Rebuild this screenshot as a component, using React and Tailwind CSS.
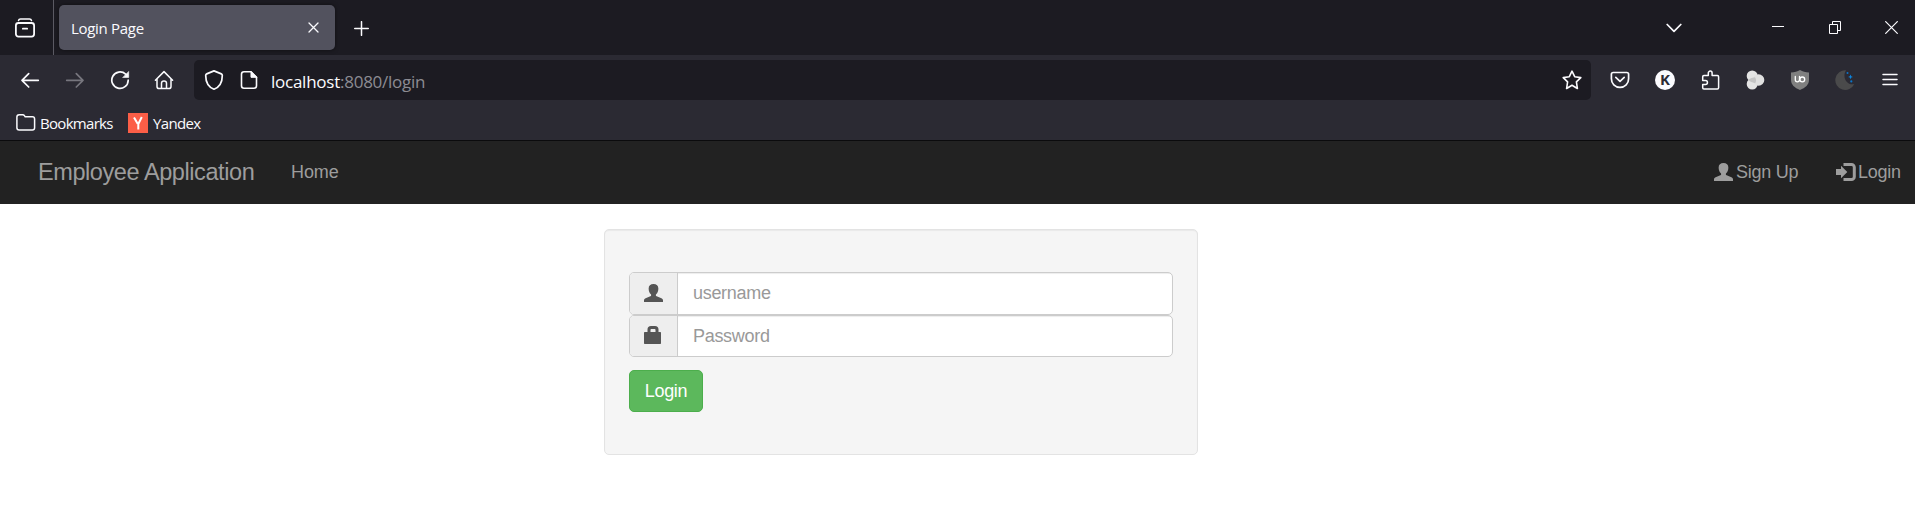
import React from "react";

function Icon({ className = "", size = 20, box = "0 0 20 20", children }) {
  return (
    <svg
      width={size}
      height={size}
      viewBox={box}
      fill="none"
      stroke="currentColor"
      strokeWidth="1.5"
      strokeLinecap="round"
      strokeLinejoin="round"
      className={"block shrink-0 " + className}
    >
      {children}
    </svg>
  );
}

function UserGlyph({ className = "" }) {
  return (
    <svg width="19" height="18" viewBox="0 0 18 18" preserveAspectRatio="none" fill="currentColor" className={"block shrink-0 " + className}>
      <path d="M9 0C6.100 0 4.400 1.800 4.400 4.400c0 2.400.7 4.400 2.100 5.800.5.8.3 1.700-.5 2.100L1.500 14.300C.4 14.800 0 15.600 0 16.500V18h18v-1.500c0-.9-.4-1.700-1.500-2.200L12 12.300c-.8-.4-1-1.300-.5-2.100 1.400-1.400 2.100-3.400 2.100-5.800C13.600 1.800 11.900 0 9 0Z" />
    </svg>
  );
}

function TabStrip() {
  return (
    <div className="flex h-[55px] bg-[#1c1b22] text-[#fbfbfe]">
      <div className="flex w-[54px] shrink-0 items-center border-r border-[#5b5a63] pl-[15px]">
        <Icon>
          <path d="M3.500 2.500C3.800 1.400 4.500 1 5.500 1h9c1 0 1.700.4 2 1.500" />
          <rect x=".9" y="5" width="18.200" height="13.600" rx="2.500" strokeWidth="1.800" />
          <path d="M7.800 10.700h4.400" strokeWidth="1.700" />
        </Icon>
      </div>
      <div className="mt-[5px] ml-[5px] flex h-[45px] w-[276px] shrink-0 items-center justify-between rounded-[5px] bg-[#52525e] pr-[16px] pl-[12px] shadow-[0_0_4px_rgba(0,0,0,0.5)]">
        <span className="pt-[2px] font-['Open_Sans',sans-serif] text-[15px] tracking-[-0.3px] whitespace-nowrap">Login Page</span>
        <Icon size={11} box="0 0 11 11" className="mb-px">
          <path d="M1 1l9 9M10 1l-9 9" strokeWidth="1.300" />
        </Icon>
      </div>
      <div className="flex grow items-center pt-[2px] pl-[19px]">
        <Icon size={15} box="0 0 15 15">
          <path d="M7.500.7v13.600M.7 7.500h13.600" />
        </Icon>
      </div>
      <div className="flex items-center pr-[17px]">
        <Icon size={16} box="0 0 16 16" className="mr-[90px]">
          <path d="M1.200 4.500L8 11.300l6.800-6.800" strokeWidth="1.700" />
        </Icon>
        <svg width="12" height="13" viewBox="0 0 12 13" className="mr-[45px] block">
          <path d="M0 5.500h12" stroke="currentColor" />
        </svg>
        <svg width="12" height="13" viewBox="0 0 12 13" fill="none" stroke="currentColor" className="mr-[44px] block">
          <path d="M3.500 3V.5h8v9H9M.5 3.500h8v9h-8z" />
        </svg>
        <svg width="13" height="13" viewBox="0 0 13 13" stroke="currentColor" strokeWidth="1.200" className="block">
          <path d="M.3.3l12.400 12.400M12.700.3L.3 12.700" />
        </svg>
      </div>
    </div>
  );
}

function Toolbar() {
  return (
    <div className="flex h-[50px] items-center bg-[#2b2a33] text-[#fbfbfe]">
      <div className="flex w-[194px] shrink-0 gap-[25px] pl-[20px]">
        <Icon>
          <path d="M18.300 10.300H2M8.700 3.600L2 10.300 8.700 17" strokeWidth="1.700" />
        </Icon>
        <Icon className="text-[#77767e]">
          <path d="M1.700 10.300H18M11.300 3.600l6.700 6.700-6.700 6.700" strokeWidth="1.700" />
        </Icon>
        <Icon>
          <path d="M18.200 10.200A8.200 8.200 0 1 1 15.600 4.200l1.800 1.700" strokeWidth="1.700" />
          <path d="M18.700 1.800v5.700H13z" fill="currentColor" strokeWidth=".6" />
        </Icon>
        <Icon className="-ml-px">
          <path d="M1.400 10.200L10 1.600l8.600 8.600M3 9v7.400c0 1.500.7 2.200 2.200 2.200h9.600c1.500 0 2.200-.7 2.200-2.200V9M7.500 18.500v-5.300c0-1.400.8-2.200 2.500-2.200s2.500.8 2.500 2.200v5.300" />
        </Icon>
      </div>
      <div className="flex h-[40px] w-[1397px] shrink-0 items-center rounded-[5px] bg-[#1c1b22] pr-[9px] pl-[10px]">
        <Icon>
          <path d="M10 .9l7.300 3c.7.3 1 .8 1 1.500C18.300 12.500 15.500 17 10 19.200 4.500 17 1.700 12.500 1.700 5.400c0-.7.3-1.200 1-1.500z" strokeWidth="1.700" />
        </Icon>
        <Icon className="ml-[15px]">
          <path d="M12 1.800H5c-1.500 0-2.500 1-2.500 2.500v11.400c0 1.500 1 2.500 2.500 2.500h10c1.500 0 2.500-1 2.500-2.500V7.300z" strokeWidth="1.600" />
          <path d="M12 1.800v5.500h5.500z" fill="currentColor" strokeWidth="1" />
        </Icon>
        <div className="ml-[12px] grow pt-[4px] font-['Open_Sans',sans-serif] text-[17px] tracking-[-0.25px] text-[#8c8b92]">
          <span className="text-[#fbfbfe]">localhost</span>:8080/login
        </div>
        <Icon>
          <path d="M10 1.200l2.700 5.500 6.100.9-4.400 4.300 1 6.600-5.400-3.200-5.400 3.200 1-6.600L1.200 7.600l6.100-.9z" strokeWidth="1.600" />
        </Icon>
      </div>
      <div className="flex grow items-center gap-[25px] pl-[19px]">
        <Icon>
          <path d="M3.200 2.500h13.600c1.200 0 1.800.7 1.800 1.800v4.400c0 5-3.600 8.600-8.600 8.600s-8.600-3.600-8.600-8.600V4.300c0-1.100.6-1.800 1.800-1.800zM5.800 7.400L10 11.300l4.200-3.900" strokeWidth="1.700" />
        </Icon>
        <div className="flex size-[20px] items-center justify-center rounded-full bg-[#fbfbfe] pb-px font-['Open_Sans',sans-serif] text-[15px] leading-none font-bold text-[#2b2a33]">
          K
        </div>
        <Icon>
          <path d="M8.300 5.500V3a1.900 1.900 0 0 1 3.800 0v2.500h5.300c.8 0 1.200.4 1.200 1.200v11c0 .8-.4 1.200-1.200 1.200H3.900c-.8 0-1.200-.4-1.200-1.200v-3.200h2.800a1.900 1.900 0 0 0 0-3.900H2.700V6.700c0-.8.4-1.200 1.200-1.200z" />
        </Icon>
        <Icon>
          <g stroke="none">
            <circle cx="7.200" cy="6" r="5.500" fill="#e4e4e4" />
            <circle cx="7.200" cy="14" r="5.500" fill="#e4e4e4" />
            <circle cx="13.600" cy="10" r="5.700" fill="#e0e0e0" />
            <path d="M3 9.800Q6.500 7.500 10 7.200q2 3 .2 6Q6 12.300 3 10.200z" fill="#c4c4c4" />
          </g>
        </Icon>
        <Icon>
          <path d="M10 0c2.500 1.700 5.500 2.300 9 2.500v7.300c0 5-3.600 8-9 10.200C4.600 17.800 1 14.800 1 9.800V2.500C4.500 2.300 7.500 1.700 10 0z" fill="#808080" stroke="none" />
          <path d="M5.300 6.500v3.300a2 2 0 0 0 2 2c1.400 0 2.200-.8 2.200-2V6.500" stroke="#fff" strokeWidth="1.300" />
          <circle cx="12.300" cy="9.400" r="2.400" stroke="#fff" strokeWidth="1.300" />
        </Icon>
        <Icon>
          <g stroke="none">
            <path d="M11 .2A9.900 9.900 0 1 0 19.300 14C12.500 16 6.500 8 11 .2z" fill="#4a4a4b" />
            <path d="M15.500 4.500l.7 1.700 1.700.7-1.700.7-.7 1.700-.7-1.700-1.700-.7 1.700-.7z" fill="#0a84e0" />
            <circle cx="12.500" cy="3" r="1" fill="#0a74c8" />
            <circle cx="16.300" cy="11.400" r="1.100" fill="#0a74c8" />
          </g>
        </Icon>
        <Icon>
          <path d="M3 4.500h14M3 9.500h14M3 14.500h14" strokeWidth="1.500" />
        </Icon>
      </div>
    </div>
  );
}

function BookmarksBar() {
  return (
    <div className="flex h-[36px] items-start border-b border-[#0b0b0d] bg-[#2b2a33] pt-[8px] pl-[16px] font-['Open_Sans',sans-serif] text-[15px] leading-[20px] tracking-[-0.7px] text-[#fbfbfe]">
      <Icon>
        <path d="M.9 4c0-1.500.8-2.300 2.300-2.300h3.500c.8 0 1.300.3 1.700.9l.8 1.200h7.200c1.400 0 2.200.8 2.200 2.200v8.800c0 1.500-.8 2.300-2.300 2.300H3.200c-1.500 0-2.300-.8-2.300-2.300z" />
      </Icon>
      <span className="ml-[4px] w-[88px]">Bookmarks</span>
      <svg width="20" height="20" viewBox="0 0 20 20" className="block shrink-0">
        <rect width="20" height="20" fill="#fc5e47" />
        <path d="M6 4.500l3.700 6.300M13.800 4l-3.500 7v5.500" fill="none" stroke="#fff" strokeWidth="2" />
      </svg>
      <span className="ml-[5px] tracking-[-0.65px]">Yandex</span>
    </div>
  );
}

function Navbar() {
  return (
    <nav className="flex h-[63px] items-center bg-[#222] px-[14px] text-[18px] tracking-[-0.25px] text-[#9d9d9d]">
      <span className="ml-[24px] w-[253px] text-[23.500px] tracking-[-0.42px]">Employee Application</span>
      <span className="grow tracking-[-0.1px]">Home</span>
      <UserGlyph className="mb-[2px]" />
      <span className="ml-[3px] w-[64px] whitespace-nowrap">Sign Up</span>
      <svg width="20" height="18" viewBox="0 0 20 18" fill="currentColor" className="mb-px ml-[36px] block">
        <path d="M0 6h5V2.800L11.300 9 5 15.200V12H0z" />
        <path d="M7.500 1.500h8A2.800 2.800 0 0 1 18.300 4.300v9.400a2.800 2.800 0 0 1-2.800 2.800h-8" fill="none" stroke="currentColor" strokeWidth="3" />
      </svg>
      <span className="ml-[2px] w-[43px]">Login</span>
    </nav>
  );
}

function LoginForm() {
  return (
    <form className="mt-[25px] ml-[604px] h-[226px] w-[594px] rounded-[5px] border border-[#e3e3e3] bg-[#f5f5f5] pt-[42px] pl-[24px] text-[18px] tracking-[-0.3px] shadow-[inset_0_1px_1px_rgba(0,0,0,0.05)]">
      <div className="flex h-[43px] w-[544px] overflow-hidden rounded-[5px] border border-[#ccc] bg-white">
        <div className="flex w-[48px] shrink-0 items-center border-r border-[#ccc] bg-[#eee] pl-[14px] text-[#555]">
          <UserGlyph className="mb-px" />
        </div>
        <input
          placeholder="username"
          className="grow pl-[15px] shadow-[inset_0_1px_1px_rgba(0,0,0,0.075)] outline-none placeholder:text-[#999]"
        />
      </div>
      <div className="flex h-[42px] w-[544px] overflow-hidden rounded-[5px] border border-[#ccc] bg-white">
        <div className="flex w-[48px] shrink-0 items-center border-r border-[#ccc] bg-[#eee] pl-[14px] text-[#555]">
          <svg width="18" height="18" viewBox="0 0 18 18" fill="currentColor" className="mb-[2px] block">
            <path d="M1 6h2.500V3.500C3.500 1.200 4.700 0 7 0h4c2.300 0 3.500 1.200 3.500 3.500V6H16c.7 0 1 .3 1 1v10c0 .7-.3 1-1 1H1c-.7 0-1-.3-1-1V7c0-.7.3-1 1-1zm5.500 0h5V4c0-.7-.3-1-1-1h-3c-.7 0-1 .3-1 1z" />
          </svg>
        </div>
        <input
          type="password"
          placeholder="Password"
          className="grow pl-[15px] shadow-[inset_0_1px_1px_rgba(0,0,0,0.075)] outline-none placeholder:text-[#999]"
        />
      </div>
      <button
        type="button"
        className="mt-[13px] flex h-[42px] w-[74px] items-center justify-center rounded-[5px] border border-[#4cae4c] bg-[#5cb85c] tracking-[-0.3px] text-white"
      >
        Login
      </button>
    </form>
  );
}

export default function App() {
  return (
    <div className="h-[513px] w-[1915px] overflow-hidden bg-white font-['Liberation_Sans',Arial,sans-serif]">
      <TabStrip />
      <Toolbar />
      <BookmarksBar />
      <Navbar />
      <LoginForm />
    </div>
  );
}
